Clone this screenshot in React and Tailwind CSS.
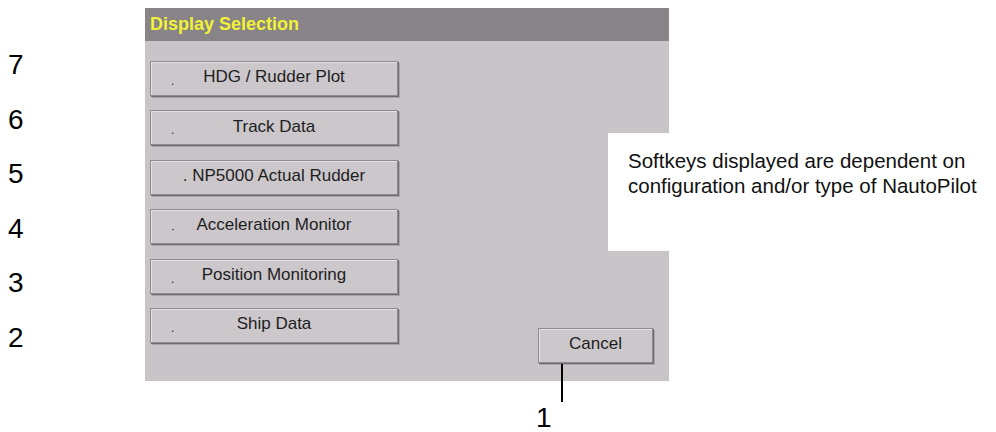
// Display Selection softkey panel with callout annotations
import React from 'react';

const keys = [
  { label: 'HDG / Rudder Plot', dot: '.' },
  { label: 'Track Data', dot: '.' },
  { label: '. NP5000 Actual Rudder', dot: null },
  { label: 'Acceleration Monitor', dot: '·' },
  { label: 'Position Monitoring', dot: '.' },
  { label: 'Ship Data', dot: '.' },
];

function SoftKey({ label, dot, className = '' }) {
  return (
    <div
      className={`relative flex items-center justify-center h-[35px] bg-[#cbc7cb] border border-[#8e8a8e] text-[17px] text-[#1e1e1e] pb-[3px] shadow-[inset_1px_1px_0_#e4e0e4,1px_1px_0_#6f6c6f,2px_2px_0_#a9a5a9] ${className}`}
    >
      {dot && (
        <span className="absolute left-[20px] top-[13px] text-[12px] leading-none">{dot}</span>
      )}
      {label}
    </div>
  );
}

export default function App() {
  return (
    <div className="relative w-[996px] h-[432px] bg-white overflow-hidden font-['Liberation_Sans',Arial,sans-serif] text-black">
      <div className="flex">
        {/* softkey numbers */}
        <div className="w-[145px] pt-[51px] pl-[8px] flex flex-col text-[28px] leading-none">
          {['7', '6', '5', '4', '3', '2'].map(n => (
            <div key={n} className="h-[54.5px]">{n}</div>
          ))}
        </div>

        <div className="flex flex-col">
          {/* panel */}
          <div className="mt-[8px] w-[524px] h-[373px] bg-[#c8c4c8] flex flex-col">
            <div className="h-[33px] bg-[#888488] flex items-center pl-[5px] text-[18px] font-bold text-[#f2f236]">
              Display Selection
            </div>
            <div className="flex-1 flex pt-[20px] pb-[18px] pl-[5px] pr-[16px]">
              <div className="w-[248px] flex flex-col gap-[14.4px]">
                {keys.map(k => <SoftKey key={k.label} {...k} />)}
              </div>
              <div className="flex-1 flex items-end justify-end">
                <SoftKey label="Cancel" className="w-[115px]" />
              </div>
            </div>
          </div>
          {/* callout label */}
          <div className="pl-[391px] pt-[23px] text-[28px] leading-none">1</div>
        </div>
      </div>

      {/* callout line from Cancel */}
      <div className="absolute left-[561px] top-[364px] w-[2px] h-[38px] bg-black" />

      {/* note box */}
      <div className="absolute left-[608px] top-[133px] w-[388px] h-[118px] bg-white pl-[20px] pt-[15px] text-[20.5px] leading-[25px] text-[#111]">
        Softkeys displayed are dependent on<br />
        configuration and/or type of NautoPilot
      </div>
    </div>
  );
}
